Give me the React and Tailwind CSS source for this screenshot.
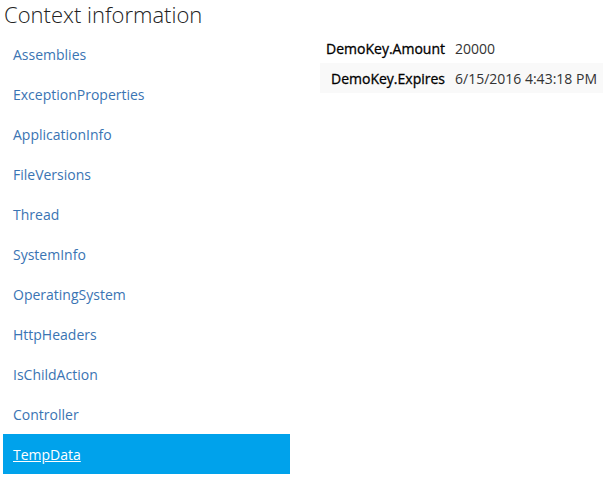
export default function App() {
  const items = [
    'Assemblies',
    'ExceptionProperties',
    'ApplicationInfo',
    'FileVersions',
    'Thread',
    'SystemInfo',
    'OperatingSystem',
    'HttpHeaders',
    'IsChildAction',
    'Controller',
    'TempData',
  ]
  const rows = [
    ['DemoKey.Amount', '20000'],
    ['DemoKey.Expires', '6/15/2016 4:43:18 PM'],
  ]

  return (
    <main className="min-h-screen bg-white text-[#333]" style={{ fontFamily: '"Open Sans", sans-serif' }}>
      <h1 className="pl-[4px] h-[30px] leading-[28px] text-[22px] font-light text-[#222]">Context information</h1>
      <div className="flex pt-[4px]">
        {/* Liste des sections */}
        <ul className="w-[287px] ml-[3px]">
          {items.map((item) => (
            <li
              key={item}
              className={
                item === 'TempData'
                  ? 'h-[40px] flex items-center pl-[10px] bg-[#00a2eb] text-white underline text-[14px]'
                  : 'h-[40px] flex items-center pl-[10px] text-[#3a74b3] text-[14px]'
              }
            >
              {item}
            </li>
          ))}
        </ul>

        {/* Valeurs */}
        <table className="ml-[30px] -mt-[1px] w-[283px] h-fit text-[14px] border-collapse">
          <tbody>
            {rows.map(([k, v], i) => (
              <tr key={k} className={i % 2 === 1 ? 'bg-[#f9f9f9]' : ''}>
                <td className="h-[30px] pl-0 pr-[10px] text-right text-black whitespace-nowrap w-[135px] [-webkit-text-stroke:0.3px_#000]">{k}</td>
                <td className="h-[30px] text-[#333] whitespace-nowrap">{v}</td>
              </tr>
            ))}
          </tbody>
        </table>
      </div>
    </main>
  )
}
